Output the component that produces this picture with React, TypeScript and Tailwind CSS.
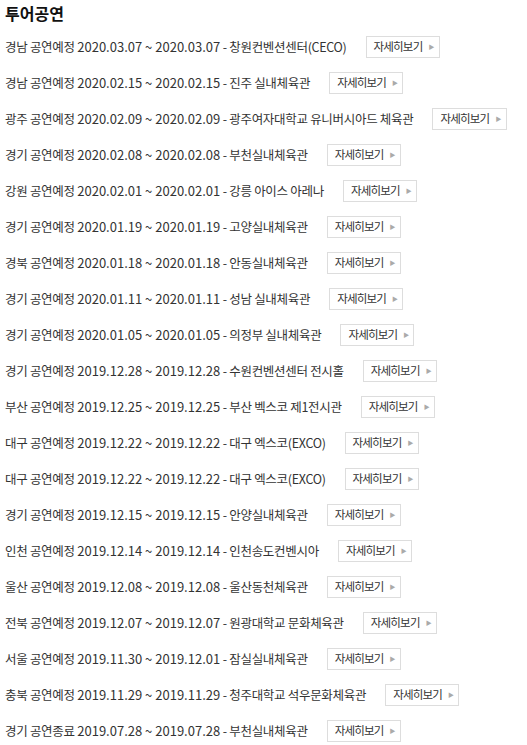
import React from "react";

const tours = [
  ["경남", "공연예정", "2020.03.07", "2020.03.07", "창원컨벤션센터(CECO)"],
  ["경남", "공연예정", "2020.02.15", "2020.02.15", "진주 실내체육관"],
  ["광주", "공연예정", "2020.02.09", "2020.02.09", "광주여자대학교 유니버시아드 체육관"],
  ["경기", "공연예정", "2020.02.08", "2020.02.08", "부천실내체육관"],
  ["강원", "공연예정", "2020.02.01", "2020.02.01", "강릉 아이스 아레나"],
  ["경기", "공연예정", "2020.01.19", "2020.01.19", "고양실내체육관"],
  ["경북", "공연예정", "2020.01.18", "2020.01.18", "안동실내체육관"],
  ["경기", "공연예정", "2020.01.11", "2020.01.11", "성남 실내체육관"],
  ["경기", "공연예정", "2020.01.05", "2020.01.05", "의정부 실내체육관"],
  ["경기", "공연예정", "2019.12.28", "2019.12.28", "수원컨벤션센터 전시홀"],
  ["부산", "공연예정", "2019.12.25", "2019.12.25", "부산 벡스코 제1전시관"],
  ["대구", "공연예정", "2019.12.22", "2019.12.22", "대구 엑스코(EXCO)"],
  ["대구", "공연예정", "2019.12.22", "2019.12.22", "대구 엑스코(EXCO)"],
  ["경기", "공연예정", "2019.12.15", "2019.12.15", "안양실내체육관"],
  ["인천", "공연예정", "2019.12.14", "2019.12.14", "인천송도컨벤시아"],
  ["울산", "공연예정", "2019.12.08", "2019.12.08", "울산동천체육관"],
  ["전북", "공연예정", "2019.12.07", "2019.12.07", "원광대학교 문화체육관"],
  ["서울", "공연예정", "2019.11.30", "2019.12.01", "잠실실내체육관"],
  ["충북", "공연예정", "2019.11.29", "2019.11.29", "청주대학교 석우문화체육관"],
  ["경기", "공연종료", "2019.07.28", "2019.07.28", "부천실내체육관"],
];

export default function App() {
  return (
    <div
      className="bg-white text-[#333] px-[5px]"
      style={{ fontFamily: '"Noto Sans CJK KR", "Noto Sans", sans-serif' }}
    >
      <h2 className="h-[29px] pt-[2px] text-[16px] font-bold text-[#111] leading-[22px]">투어공연</h2>
      <ul>
        {tours.map((t, i) => (
          <li key={i} className="flex items-center h-[36px] whitespace-nowrap">
            <span className="text-[12.5px] tracking-[-0.3px]">
              {t[0]} {t[1]}{" "}
              <span className="text-[13px] tracking-normal">
                {t[2]} ~ {t[3]}
              </span>{" "}
              - {t[4]}
            </span>
            <button className="ml-[19px] shrink-0 flex items-center h-[22px] pl-[7px] pr-[5px] border border-[#ddd] bg-white text-[11.5px] text-[#333] leading-none tracking-[-0.8px]">
              자세히보기
              <span className="ml-[6px] text-[6px] text-[#aaa]">▶</span>
            </button>
          </li>
        ))}
      </ul>
    </div>
  );
}
